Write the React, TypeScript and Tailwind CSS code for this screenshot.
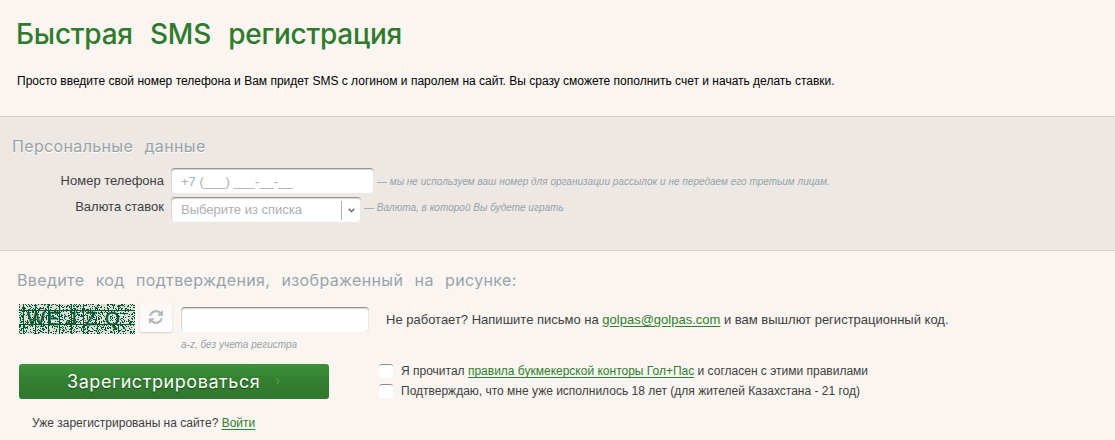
import type { ReactNode } from "react";

const GRID_X = [4, 16, 29, 40, 52, 64];

function noisePath(width: number, height: number, density: number): string {
  let seed = 90210;
  let d = "";
  for (let y = 0; y < height; y++) {
    for (let x = 0; x < width; x++) {
      seed = (Math.imul(seed, 1664525) + 1013904223) >>> 0;
      if (seed / 4294967296 < density) d += `M${x} ${y}h1v1h-1z`;
    }
  }
  return d;
}

const NOISE = noisePath(116, 30, 0.31);

function Captcha() {
  return (
    <svg width="116" height="30" viewBox="0 0 116 30" className="block shrink-0 bg-[#dedddb]">
      <g fill="#00572e" shapeRendering="crispEdges">
        <path d={NOISE} />
        <rect x="0" y="6" width="116" height="1" />
        <rect x="0" y="20" width="116" height="1" />
        {GRID_X.map((x) => (
          <rect key={x} x={x} y="0" width="1" height="30" />
        ))}
      </g>
      <g fill="#00572e" fontFamily="Liberation Sans, Arial, sans-serif" fontSize="19" stroke="#00572e" strokeWidth="0.3">
        <text x="8" y="20.500">W</text>
        <text x="28" y="20.500">E</text>
        <text x="48" y="20.500">J</text>
        <text x="66" y="20.500">Z</text>
        <text x="86" y="21">Q</text>
      </g>
    </svg>
  );
}

function Link({ children }: { children: ReactNode }) {
  return (
    <a href="#" className="text-[#2f7f2e] underline underline-offset-2">
      {children}
    </a>
  );
}

function RefreshIcon() {
  return (
    <svg width="14" height="14" viewBox="0 0 1536 1536" fill="#b4bbbe" className="mr-[1px] mb-[2px]">
      <path d="M1511 928q0 5-1 7-64 268-268 434.500T764 1536q-146 0-282.500-55T238 1324l-129 129q-19 19-45 19t-45-19-19-45V960q0-26 19-45t45-19h448q26 0 45 19t19 45-19 45l-137 137q71 66 161 102t187 36q134 0 250-65t186-179q11-17 53-117 8-23 30-23h192q13 0 22.500 9.500t9.500 22.500zm25-800v448q0 26-19 45t-45 19h-448q-26 0-45-19t-19-45 19-45l138-138Q969 256 768 256q-134 0-250 65T332 500q-11 17-53 117-8 23-30 23H50q-13 0-22.500-9.500T18 608v-7q65-268 270-434.500T768 0q146 0 284 55.500T1297 212l130-129q19-19 45-19t45 19 19 45z" />
    </svg>
  );
}

const inset = "rounded-[4px] border-t border-[#949494] bg-white shadow-[inset_1px_1px_1px_#d4d4d4,inset_-1px_0_1px_#e7e4e2]";

function Check() {
  return (
    <input
      type="checkbox"
      className="block size-[14px] shrink-0 appearance-none rounded-[3px] border-t border-[#8c8c8c] bg-white checked:bg-[#2f7f2e]"
    />
  );
}

export default function App() {
  return (
    <main className="h-[440px] w-[1115px] overflow-hidden bg-[#faf5f1] font-['Liberation_Sans',Arial,sans-serif] text-[12px] whitespace-nowrap text-[#404040]">
      <header className="h-[116px] pt-[14px] pl-[16px]">
        <h1 className="h-[40px] font-['Inter',sans-serif] text-[28px] leading-[40px] font-medium tracking-[-0.25px] text-[#2f7a2d] [word-spacing:10px]">
          Быстрая SMS регистрация
        </h1>
        <p className="mt-[19px] ml-[1px] leading-[16px] text-black">
          Просто введите свой номер телефона и Вам придет SMS с логином и паролем на сайт. Вы сразу сможете пополнить счет и начать делать ставки.
        </p>
      </header>

      <section className="h-[135px] border-y border-[#d5d0cd] bg-[#ede8e4] pt-[17px]">
        <h2 className="h-[24px] pl-[12px] font-['Inter',sans-serif] text-[16px] leading-[24px] font-normal tracking-[0.35px] text-[#98a2a7] [text-shadow:0_1px_0_white] [word-spacing:6.5px]">
          Персональные данные
        </h2>
        <div className="mt-[10px] flex h-[25px] items-start">
          <label htmlFor="phone" className="mr-[7px] w-[164px] text-right text-[13px] leading-[26px]">Номер телефона</label>
          <input
            id="phone"
            placeholder="+7 (___) ___-__-__"
            className={`h-[25px] w-[203px] pl-[10px] text-[13px] placeholder:text-[#abb0b2] ${inset}`}
          />
          <em className="ml-[3px] text-[10px] leading-[28px] tracking-[0.01px] text-[#98a2a7]">
            — мы не используем ваш номер для организации рассылок и не передаем его третьим лицам.
          </em>
        </div>
        <div className="mt-[4px] flex h-[25px] items-start">
          <span className="mr-[7px] w-[164px] text-right text-[13px] leading-[20px]">Валюта ставок</span>
          <button className={`flex h-[25px] w-[190px] items-center pl-[10px] text-left text-[13px] text-[#abb0b2] ${inset}`}>
            <span className="grow">Выберите из списка</span>
            <span className="flex h-[19px] w-[20px] items-center justify-center border-l border-[#b2b2b2]">
              <svg width="7" height="5" viewBox="0 0 7 5" fill="none" stroke="#7a878e" strokeWidth="1.8">
                <path d="M.6.8 3.500 3.500 6.400.8" />
              </svg>
            </span>
          </button>
          <em className="ml-[3px] text-[10px] leading-[22px] tracking-[0.02px] text-[#98a2a7]">— Валюта, в которой Вы будете играть</em>
        </div>
      </section>

      <section className="pl-[17px]">
        <h2 className="h-[24px] pt-[17px] font-['Inter',sans-serif] text-[16px] leading-[24px] font-normal tracking-[0.35px] text-[#98a2a7] [text-shadow:0_1px_0_white] [word-spacing:6.5px]">
          Введите код подтверждения, изображенный на рисунке:
        </h2>
        <div className="mt-[28px] flex h-[54px] items-start pl-[2px]">
          <div className="mt-[1px]"><Captcha /></div>
          <button aria-label="Обновить" className="ml-[5px] flex h-[29px] w-[32px] items-center justify-center rounded-[3px] bg-gradient-to-b from-[#fbf7f4] to-white shadow-[0_1px_2px_#d5d0cc]">
            <RefreshIcon />
          </button>
          <div className="mt-[4px] ml-[9px] w-[188px]">
            <input aria-label="Код" className={`block h-[25px] w-full px-2 text-[13px] ${inset}`} />
            <em className="block text-[10px] leading-[26px] text-[#98a2a7]">a-z, без учета регистра</em>
          </div>
          <p className="mt-[8px] ml-[17px] text-[13px] leading-[18px]">
            Не работает? Напишите письмо на <Link>golpas@golpas.com</Link> и вам вышлют регистрационный код.
          </p>
        </div>
        <div className="mt-[7px] flex items-start pl-[2px]">
          <button className="flex h-[35px] w-[310px] items-center rounded-[3px] bg-gradient-to-b from-[#3b9137] via-[#347f31] to-[#30772e] pl-[48px] font-['Inter',sans-serif] text-[18px] tracking-[0.56px] text-white [text-shadow:0_1px_1px_#174b17]">
            <span>Зарегистрироваться</span>
            <svg width="4" height="7" viewBox="0 0 4 7" fill="none" stroke="#70a84b" className="mb-[1px] ml-[16px]">
              <path d="m.5.5 2.500 3-2.500 3" />
            </svg>
          </button>
          <div className="ml-[50px]">
            <label className="flex h-[20px] items-start">
              <Check />
              <span className="ml-[8px] leading-[14px]">
                Я прочитал <Link>правила букмекерской конторы Гол+Пас</Link> и согласен с этими правилами
              </span>
            </label>
            <label className="flex h-[20px] items-start">
              <Check />
              <span className="ml-[8px] leading-[14px]">Подтверждаю, что мне уже исполнилось 18 лет (для жителей Казахстана - 21 год)</span>
            </label>
          </div>
        </div>
        <p className="mt-[11px] pl-[15px] leading-[16px]">
          Уже зарегистрированы на сайте? <Link>Войти</Link>
        </p>
      </section>
    </main>
  );
}
